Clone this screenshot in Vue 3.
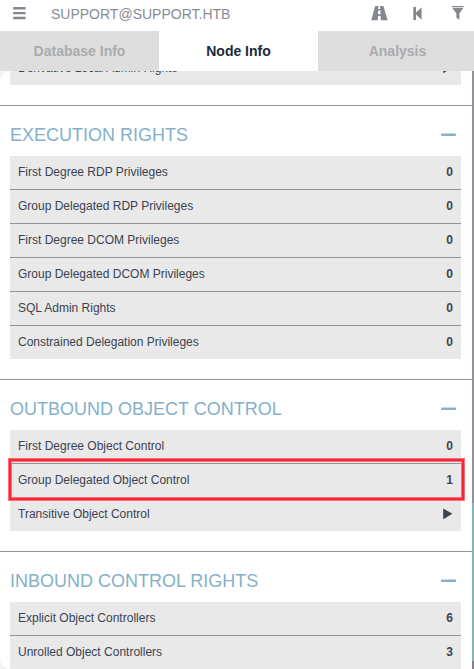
<script setup>
import { ref } from 'vue'

const tabs = ['Database Info', 'Node Info', 'Analysis']
const active = ref('Node Info')

const sections = [
  {
    title: 'EXECUTION RIGHTS',
    rows: [
      ['First Degree RDP Privileges', '0'],
      ['Group Delegated RDP Privileges', '0'],
      ['First Degree DCOM Privileges', '0'],
      ['Group Delegated DCOM Privileges', '0'],
      ['SQL Admin Rights', '0'],
      ['Constrained Delegation Privileges', '0'],
    ],
  },
  {
    title: 'OUTBOUND OBJECT CONTROL',
    rows: [
      ['First Degree Object Control', '0'],
      ['Group Delegated Object Control', '1', true],
      ['Transitive Object Control', null],
    ],
  },
  {
    title: 'INBOUND CONTROL RIGHTS',
    rows: [
      ['Explicit Object Controllers', '6'],
      ['Unrolled Object Controllers', '3'],
    ],
  },
]
</script>

<template>
  <div class="window">
    <header class="topbar">
      <svg class="menu" width="13" height="13" viewBox="0 0 13 13"><path d="M0.2 0h12.4v2.4H0.2zM0.2 4.9h12.4v2.4H0.2zM0.2 9.8h12.4v2.4H0.2z" /></svg>
      <span class="search">SUPPORT@SUPPORT.HTB</span>
      <svg class="road" width="17" height="15" viewBox="0 0 17 15"><path d="M4.2 0H7.5L7.3 3H9.3L9.1 0H12.4L16.6 14.2H9.8L9.6 10H7L6.8 14.2H0.2ZM7.2 4.6L7 8.2H9.6L9.4 4.6Z" fill-rule="evenodd" /></svg>
      <svg class="back" width="9" height="13" viewBox="0 0 9 13"><path d="M0.3 0H3V5.6L8.6 0.3V12.7L3 7.4V13H0.3Z" /></svg>
      <svg class="filter" width="12" height="14" viewBox="0 0 12 14"><path d="M0 0H11.6V1.2H0zM0.3 2H11.3L7.4 7.4V13.8L4.4 11.8V7.4Z" /></svg>
    </header>
    <nav class="tabs">
      <button v-for="t in tabs" :key="t" :class="['tab', { active: t === active }]" @click="active = t">{{ t }}</button>
    </nav>
    <div class="body">
      <main class="panel">
        <div class="table clipped">
          <div class="row">
            <span>Derivative Local Admin Rights</span>
            <svg width="10" height="12" viewBox="0 0 10 12"><path d="M0.2 0.4L9.4 5.7L0.2 11.2Z" /></svg>
          </div>
        </div>
        <section v-for="s in sections" :key="s.title">
          <div class="heading">
            <h2>{{ s.title }}</h2>
            <i class="collapse"></i>
          </div>
          <div class="table">
            <div v-for="r in s.rows" :key="r[0]" :class="['row', { marked: r[2] }]">
              <span>{{ r[0] }}</span>
              <b v-if="r[1] !== null">{{ r[1] }}</b>
              <svg v-else width="10" height="12" viewBox="0 0 10 12"><path d="M0.2 0.4L9.4 5.7L0.2 11.2Z" /></svg>
            </div>
          </div>
        </section>
      </main>
      <aside class="edge"></aside>
    </div>
  </div>
</template>

<style>
body {
  margin: 0;
  overflow: hidden;
}
</style>

<style scoped>
.window {
  width: 474px;
  height: 669px;
  display: flex;
  flex-direction: column;
  overflow: hidden;
  background: #fff;
  font-family: "Liberation Sans", Arial, sans-serif;
}
.topbar {
  flex: none;
  height: 31px;
  box-sizing: border-box;
  display: flex;
  align-items: flex-start;
  padding: 6px 10px 0 13px;
  fill: #85878e;
}
.menu {
  margin-top: 1px;
}
.search {
  width: 320px;
  margin-left: 25px;
  font-size: 14px;
  line-height: 17px;
  color: #898b92;
}
.back {
  margin: 1px 0 0 25px;
}
.filter {
  margin-left: auto;
}
.tabs {
  flex: none;
  display: grid;
  grid-template-columns: 159px 159px 156px;
  height: 40px;
}
.tab {
  border: 0;
  padding: 0;
  background: #dedede;
  color: #a9abae;
  font: bold 14px/40px "Liberation Sans", Arial, sans-serif;
}
.tab:last-child {
  padding-left: 3px;
}
.tab.active {
  background: #fff;
  color: #202b38;
}
.body {
  flex: 1;
  min-height: 0;
  display: flex;
  overflow: hidden;
  background: #f2f2f2;
}
.panel {
  width: 472px;
  overflow: hidden;
  border-radius: 10px 0 0 10px;
  background: #fff;
}
.edge {
  width: 2px;
  background: linear-gradient(#909296 432px, #83b8b9 432px 590px, #85808a 590px);
}
.table {
  margin: 0 11px 20px 10px;
  background: #e9e9e9;
}
.clipped {
  margin-top: -19px;
}
.row {
  position: relative;
  height: 33px;
  display: flex;
  align-items: center;
  justify-content: space-between;
  padding: 0 8px;
  font-size: 12px;
  line-height: 33px;
  color: #3b4350;
  fill: #3b4350;
}
.row svg {
  margin-bottom: 1px;
}
.row + .row {
  border-top: 1px solid #929297;
}
.marked::before,
.marked::after {
  content: "";
  position: absolute;
  z-index: 1;
}
.marked::before {
  inset: -6px -4px -4px -2px;
  border: 4px solid #f66f79;
}
.marked::after {
  inset: -5px -3px -3px -1px;
  border: 2px solid #fb2633;
}
.heading {
  height: 50px;
  border-top: 1px solid #929297;
  display: flex;
  align-items: center;
  justify-content: space-between;
  padding: 0 16px 0 10px;
}
h2 {
  margin: 8px 0 0;
  font-size: 18px;
  font-weight: 400;
  line-height: 24px;
  color: #84b1c8;
}
.collapse {
  width: 15px;
  height: 3px;
  margin-top: 7px;
  border-radius: 1px;
  background: linear-gradient(#c6dbe6 1px, #84b1c8 1px);
}
</style>
